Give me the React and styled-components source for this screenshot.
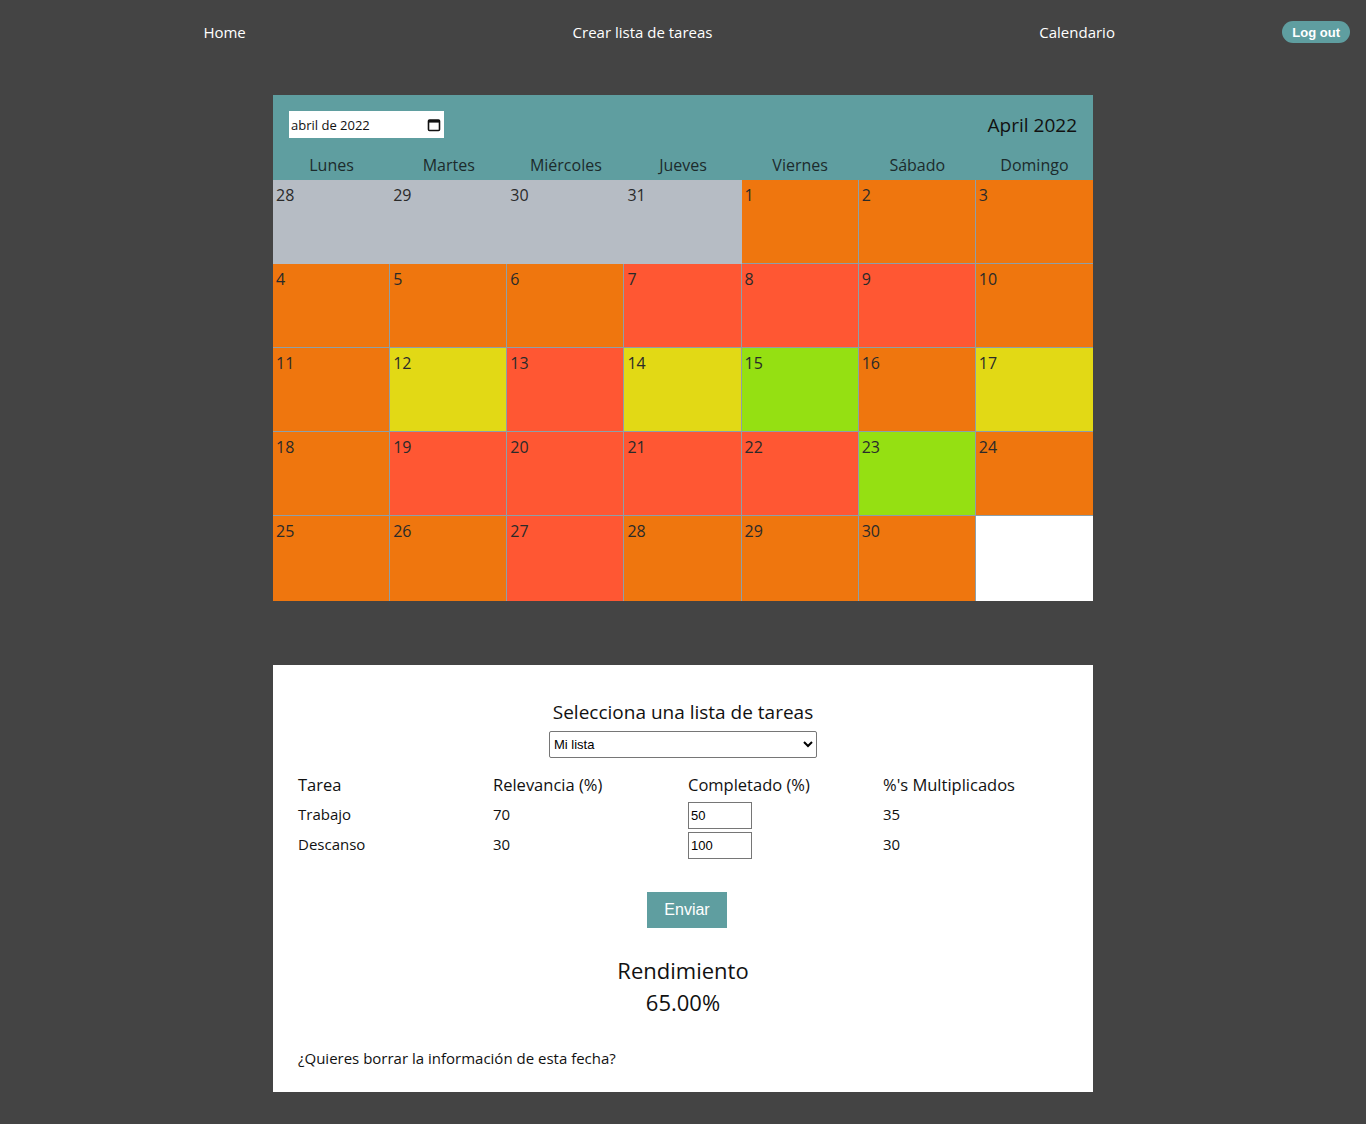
import React from "react";
import styled, { createGlobalStyle } from "styled-components";

const TEAL = "#5f9ea0";

const COLORS = {
  gray: "#b6bcc4",
  orange: "#ef760e",
  red: "#ff5733",
  yellow: "#e2d915",
  green: "#95e012",
  empty: "#ffffff",
};

const GlobalStyle = createGlobalStyle`
  body {
    margin: 0;
    background: #444444;
    font-family: "Open Sans", "Noto Sans", sans-serif;
  }
`;

const Nav = styled.nav`
  height: 64px;
  display: flex;
  align-items: center;
  padding: 0 16px 0 40px;
`;

const NavLinks = styled.div`
  flex: 1;
  display: flex;
  padding-right: 4px;
`;

const NavLink = styled.a`
  flex: 1 1 auto;
  text-align: center;
  color: #ffffff;
  font-size: 15px;
  text-decoration: none;
  cursor: pointer;
`;

const LogOut = styled.button`
  border: none;
  background: ${TEAL};
  color: #ffffff;
  font-family: "Liberation Sans", Arial, sans-serif;
  font-weight: 700;
  font-size: 13px;
  height: 22px;
  padding: 0 10px;
  border-radius: 11px;
  cursor: pointer;
`;

const Main = styled.main`
  display: flex;
  flex-direction: column;
  align-items: center;
  padding: 31px 0 32px;
`;

const Calendar = styled.section`
  width: 820px;
`;

const CalHeader = styled.div`
  background: ${TEAL};
  padding: 16px 16px 0;
`;

const TopRow = styled.div`
  display: flex;
  justify-content: space-between;
  align-items: center;
  height: 27px;
`;

const MonthPicker = styled.div`
  width: 155px;
  height: 27px;
  box-sizing: border-box;
  background: #ffffff;
  display: flex;
  align-items: center;
  justify-content: space-between;
  padding: 0 3px 0 2px;
  font-size: 13px;
  color: #111;
`;

const MonthTitle = styled.h2`
  margin: 0;
  font-size: 19px;
  font-weight: 400;
  color: #111;
`;

const Weekdays = styled.div`
  display: grid;
  grid-template-columns: repeat(7, 1fr);
  margin: 13px -16px 0;
  line-height: 29px;
  font-size: 16px;
  color: #1c2b2c;
  text-align: center;
`;

const Days = styled.div`
  display: grid;
  grid-template-columns: repeat(7, 1fr);
  grid-template-rows: repeat(4, 84px) 85px;
`;

const Day = styled.div`
  background: ${(p) => COLORS[p.$tone]};
  border: 1px solid ${(p) => (p.$tone === "gray" ? COLORS.gray : "#8e9fa8")};
  border-width: 0 1px 1px 0;
  padding: 4px 3px;
  font-size: 16px;
  color: #2a2a2a;
  line-height: 22px;

  &:nth-child(7n) {
    border-right-width: 0;
  }

  &:nth-last-child(-n + 7) {
    border-bottom-width: 0;
  }
`;

const Card = styled.section`
  width: 820px;
  box-sizing: border-box;
  margin-top: 64px;
  background: #ffffff;
  padding: 33px 25px 23px;
  display: flex;
  flex-direction: column;
  align-items: center;
  color: #111;
`;

const CardTitle = styled.h3`
  margin: 0;
  font-size: 19px;
  font-weight: 400;
  line-height: 28px;
`;

const ListSelect = styled.select`
  margin-top: 5px;
  width: 268px;
  height: 27px;
  font-family: "Liberation Sans", Arial, sans-serif;
  font-size: 13px;
  border: 1px solid #767676;
  border-radius: 2px;
  background: #fff;
  color: #000;
`;

const Table = styled.div`
  width: 100%;
  margin-top: 11px;
  display: grid;
  grid-template-columns: repeat(4, 195px);
`;

const Cell = styled.div`
  height: 30px;
  display: flex;
  align-items: center;
  font-size: ${(p) => (p.$head ? "16.5px" : "15px")};
`;

const NumInput = styled.input`
  width: 64px;
  height: 27px;
  box-sizing: border-box;
  border: 1px solid #767676;
  padding: 0 2px;
  font-family: "Liberation Sans", Arial, sans-serif;
  font-size: 13px;
  margin-top: 3px;
`;

const Submit = styled.button`
  margin: 33px 0 0 8px;
  width: 80px;
  height: 36px;
  border: none;
  background: ${TEAL};
  color: #ffffff;
  font-family: "Liberation Sans", Arial, sans-serif;
  font-size: 16px;
  cursor: pointer;
`;

const Result = styled.div`
  margin-top: 26px;
  text-align: center;
  font-size: 22px;
  line-height: 32px;
`;

const Footnote = styled.p`
  align-self: flex-start;
  margin: 29px 0 0;
  font-size: 15px;
  line-height: 22px;
`;

const CalendarIcon = () => (
  <svg width="14" height="14" viewBox="0 0 14 14" fill="none">
    <rect x="1.5" y="2" width="11" height="10.5" rx="1" stroke="#111" strokeWidth="1.6" />
    <rect x="1.5" y="2" width="11" height="2.6" fill="#111" />
  </svg>
);

const WEEKDAYS = ["Lunes", "Martes", "Miércoles", "Jueves", "Viernes", "Sábado", "Domingo"];

const tones = {
  o: "orange",
  r: "red",
  y: "yellow",
  g: "green",
};

// one letter per day of April, week by week
const aprilPattern = ["ooo", "ooorrro", "oyrygoy", "orrrrgo", "oorooo"].join("");

const days = [
  ...[28, 29, 30, 31].map((n) => ({ n, tone: "gray" })),
  ...aprilPattern.split("").map((c, i) => ({ n: i + 1, tone: tones[c] })),
  { n: "", tone: "empty" },
];

const tasks = [
  { name: "Trabajo", rel: 70, done: 50, mult: 35 },
  { name: "Descanso", rel: 30, done: 100, mult: 30 },
];

export default function App() {
  return (
    <>
      <GlobalStyle />
      <Nav>
        <NavLinks>
          <NavLink>Home</NavLink>
          <NavLink>Crear lista de tareas</NavLink>
          <NavLink>Calendario</NavLink>
        </NavLinks>
        <LogOut type="button">Log out</LogOut>
      </Nav>

      <Main>
        <Calendar>
          <CalHeader>
            <TopRow>
              <MonthPicker>
                <span>abril de 2022</span>
                <CalendarIcon />
              </MonthPicker>
              <MonthTitle>April 2022</MonthTitle>
            </TopRow>
            <Weekdays>
              {WEEKDAYS.map((d) => (
                <div key={d}>{d}</div>
              ))}
            </Weekdays>
          </CalHeader>
          <Days>
            {days.map((d, i) => (
              <Day key={i} $tone={d.tone}>
                {d.n}
              </Day>
            ))}
          </Days>
        </Calendar>

        <Card>
          <CardTitle>Selecciona una lista de tareas</CardTitle>
          <ListSelect defaultValue="mi">
            <option value="mi">Mi lista</option>
          </ListSelect>
          <Table>
            <Cell $head>Tarea</Cell>
            <Cell $head>Relevancia (%)</Cell>
            <Cell $head>Completado (%)</Cell>
            <Cell $head>%'s Multiplicados</Cell>
            {tasks.map((t) => (
              <React.Fragment key={t.name}>
                <Cell>{t.name}</Cell>
                <Cell>{t.rel}</Cell>
                <Cell>
                  <NumInput type="text" defaultValue={t.done} />
                </Cell>
                <Cell>{t.mult}</Cell>
              </React.Fragment>
            ))}
          </Table>
          <Submit type="button">Enviar</Submit>
          <Result>
            <div>Rendimiento</div>
            <div>65.00%</div>
          </Result>
          <Footnote>¿Quieres borrar la información de esta fecha?</Footnote>
        </Card>
      </Main>
    </>
  );
}
